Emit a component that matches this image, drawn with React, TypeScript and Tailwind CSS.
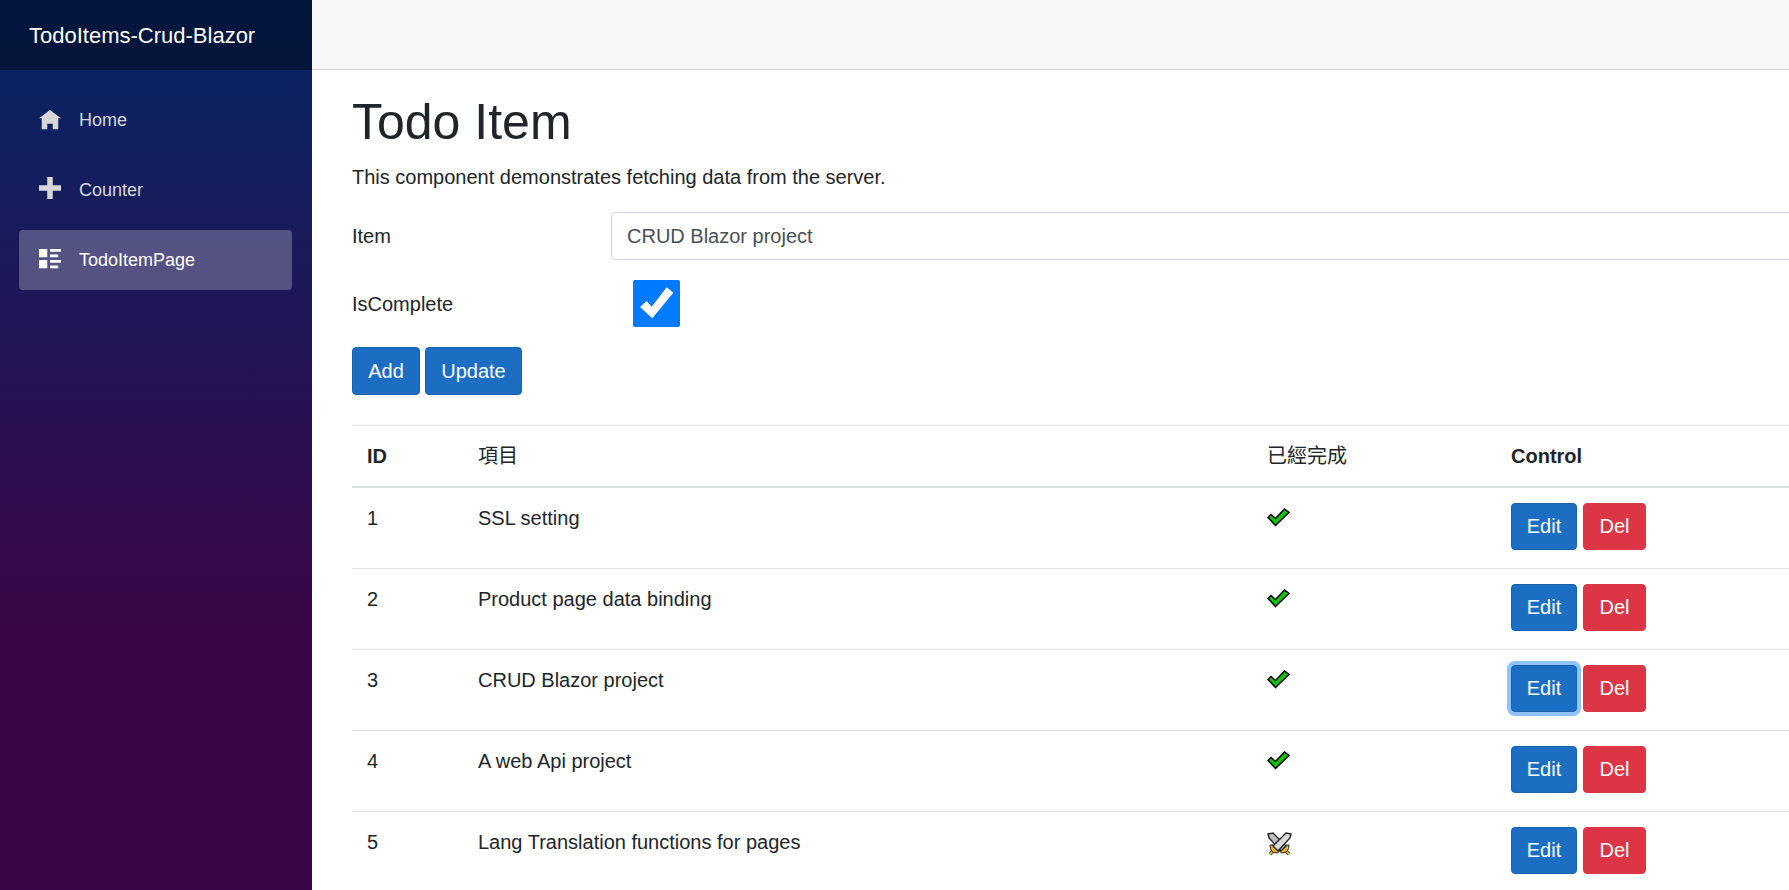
const items = [
  { id: 1, title: 'SSL setting', done: true },
  { id: 2, title: 'Product page data binding', done: true },
  { id: 3, title: 'CRUD Blazor project', done: true, focused: true },
  { id: 4, title: 'A web Api project', done: true },
  { id: 5, title: 'Lang Translation functions for pages', done: false },
];

const CheckMark = () => (
  <svg width="23" height="19" viewBox="0 0 23 19" className="block">
    <path d="M1 9.5 L4 6.5 L8.5 10.5 L17.5 1 L22 4.5 L8.5 17.5 Z" fill="#14c10e" stroke="#000" strokeWidth="1.5" />
  </svg>
);

const Swords = () => (
  <svg width="25" height="24" viewBox="0 0 25 24" className="block">
    <path d="M8 17 L3 22 M17 17 L22 22" stroke="#222" strokeWidth="3.5" />
    <path d="M8 17 L3 22 M17 17 L22 22" stroke="#f0b429" strokeWidth="2" />
    <path d="M3 13 L6 13 Q7 17 12.5 18 Q18 17 19 13 L22 13 Q22 21 15 21 L12.5 19.5 L10 21 Q3 21 3 13 Z" fill="#f0b429" stroke="#222" strokeWidth="1" />
    <path d="M1 2 L6 1 L19 14 L14 19 L2 6 Z" fill="#bdbdbd" stroke="#222" strokeWidth="1.4" />
    <path d="M24 2 L19 1 L6 14 L11 19 L23 6 Z" fill="#d9d9d9" stroke="#222" strokeWidth="1.4" />
  </svg>
);

const HomeIcon = () => (
  <svg width="22" height="22" viewBox="0 0 8 8" fill="currentColor" className="block mt-[2px]">
    <path d="M4 0l-4 3h1v4h2v-2h2v2h2v-4.030l1 .030-4-3z" />
  </svg>
);

const PlusIcon = () => (
  <svg width="22" height="22" viewBox="0 0 8 8" fill="currentColor" className="block -mt-[4px]">
    <path d="M3 0v3h-3v2h3v3h2v-3h3v-2h-3v-3h-2z" />
  </svg>
);

const ListIcon = () => (
  <svg width="22" height="22" viewBox="0 0 8 8" fill="currentColor" className="block">
    <path d="M0 0v3h3v-3h-3zm4 0v1h4v-1h-4zm0 2v1h3v-1h-3zm-4 2v3h3v-3h-3zm4 0v1h4v-1h-4zm0 2v1h3v-1h-3z" />
  </svg>
);

const NavItem = ({ icon, label, active }: { icon: React.ReactNode; label: string; active?: boolean }) => (
  <div className={`flex items-center h-[60px] rounded pl-[20px] text-[18px] ${active ? 'bg-white/25 text-white' : 'text-[#d7d7d7]'}`}>
    <span className="w-[40px]">{icon}</span>
    <span>{label}</span>
  </div>
);

const App = () => {
  return (
    <div className="flex h-[890px] overflow-hidden bg-white text-[#212529] text-[20px] font-['Liberation_Sans','Noto_Sans_CJK_TC',sans-serif]">
      <aside className="w-[312px] shrink-0 bg-[linear-gradient(180deg,#052767_0%,#3a0647_70%)]">
        <div className="h-[70px] flex items-center pl-[29px] bg-black/40 text-white text-[22px]">
          TodoItems-Crud-Blazor
        </div>
        <nav className="pl-[19px] pr-[20px] pt-[20px] flex flex-col gap-[10px]">
          <NavItem icon={<HomeIcon />} label="Home" />
          <NavItem icon={<PlusIcon />} label="Counter" />
          <NavItem icon={<ListIcon />} label="TodoItemPage" active />
        </nav>
      </aside>

      <main className="flex-1 min-w-0 overflow-hidden">
        <div className="h-[70px] bg-[#f7f7f7] border-b border-[#d6d5d5]" />
        <div className="pl-[40px] w-[1700px]">
          <h1 className="text-[50px] leading-[60px] font-normal mt-[22px] mb-[10px]">Todo Item</h1>
          <p className="leading-[30px] mb-[20px]">This component demonstrates fetching data from the server.</p>

          <div className="flex items-center h-[48px] mb-[20px]">
            <label className="w-[259px] shrink-0">Item</label>
            <input
              readOnly
              value="CRUD Blazor project"
              className="w-full h-[48px] px-[15px] border border-[#ced4da] rounded text-[#495057] bg-white"
            />
          </div>

          <div className="flex items-center h-[47px] mb-[20px]">
            <label className="w-[259px] shrink-0">IsComplete</label>
            <span className="ml-[22px] block w-[47px] h-[47px] bg-[#007bff] rounded-[2px]">
              <svg width="47" height="47" viewBox="0 0 47 47" className="block">
                <path d="M7 27 L13.7 21 L18.7 26.7 L33.7 7.3 L40.3 12.7 L19.3 38.3 Z" fill="#fff" />
              </svg>
            </span>
          </div>

          <div className="flex gap-[5px] mb-[30px]">
            <button className="w-[68px] h-[48px] text-white bg-[#1b6ec2] border border-[#1861ac] rounded">Add</button>
            <button className="w-[97px] h-[48px] text-white bg-[#1b6ec2] border border-[#1861ac] rounded">Update</button>
          </div>

          <table className="w-full table-fixed border-collapse">
            <thead>
              <tr className="h-[61px] border-t border-b-2 border-[#dee2e6]">
                <th className="text-left px-[15px] w-[111px]">ID</th>
                <th className="text-left px-[15px] font-normal w-[789px]">項目</th>
                <th className="text-left px-[15px] font-normal w-[244px]">已經完成</th>
                <th className="text-left px-[15px]">Control</th>
              </tr>
            </thead>
            <tbody>
              {items.map(item => (
                <tr key={item.id} className="border-b border-[#dee2e6] align-top">
                  <td className="px-[15px] pt-[15px] leading-[30px]">{item.id}</td>
                  <td className="px-[15px] pt-[15px] leading-[30px]">{item.title}</td>
                  <td className="px-[15px] pt-[20px]">{item.done ? <CheckMark /> : <Swords />}</td>
                  <td className="px-[15px] pt-[15px] pb-[18px]">
                    <div className="flex gap-[6px]">
                      <button
                        className={`w-[66px] h-[47px] text-white bg-[#1b6ec2] border border-[#1861ac] rounded ${
                          item.focused ? 'ring-[4px] ring-[#8fc3fa]' : ''
                        }`}
                      >
                        Edit
                      </button>
                      <button className="w-[63px] h-[47px] text-white bg-[#dc3545] border border-[#dc3545] rounded">Del</button>
                    </div>
                  </td>
                </tr>
              ))}
            </tbody>
          </table>
        </div>
      </main>
    </div>
  );
};

export default App;
